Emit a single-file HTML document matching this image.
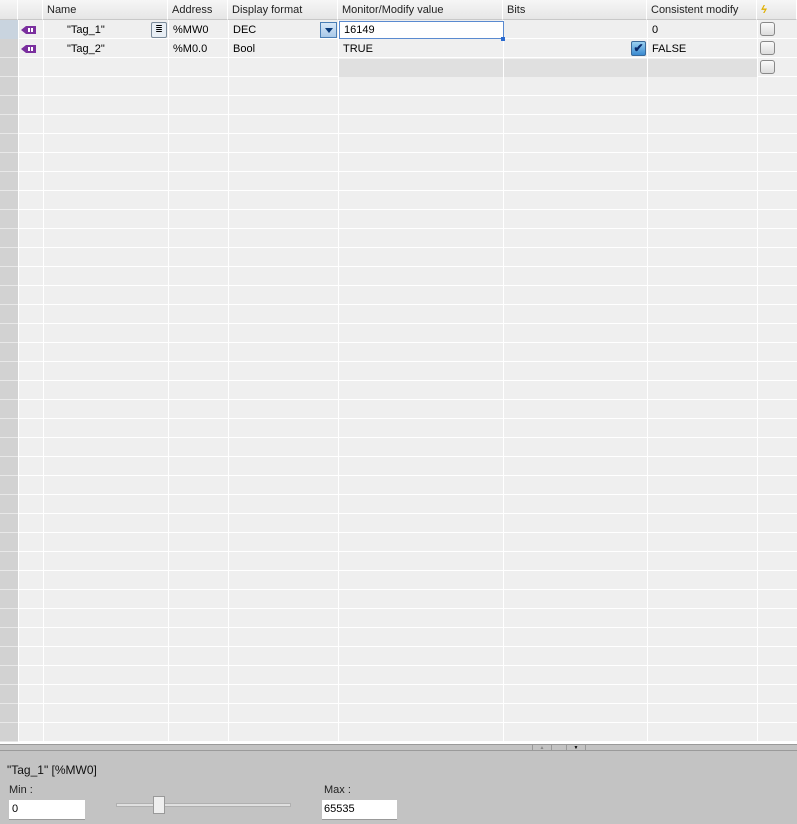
<!DOCTYPE html>
<html><head><style>
*{margin:0;padding:0;box-sizing:border-box}
body{width:797px;height:824px;overflow:hidden;background:#efefef;font-family:"Liberation Sans",sans-serif;font-size:11px;color:#000;position:relative}
.a{position:absolute}
.hdr{top:0;height:20px;background:linear-gradient(#f6f6f6,#e6e6e6);border-bottom:1px solid #c8c8c8;border-right:1px solid #fff;padding:4px 0 0 4px;color:#222}
.vl{position:absolute;top:20px;width:1px;height:722px;background:#fff}
.t{position:absolute;font-size:11px}
.cb{position:absolute;left:760px;width:15px;height:14px;border:1px solid #888;border-radius:3px;background:linear-gradient(#fafafa,#dcdcdc)}
</style></head><body>
<div class="a" style="left:0;top:20px;width:18px;height:722px;background:repeating-linear-gradient(#d2d2d2 0 18px,#e8e8e8 18px 19px)"></div>
<div class="a" style="left:0;top:20px;width:18px;height:19px;background:#c9d4df"></div>
<div class="a" style="left:18px;top:20px;width:779px;height:722px;background:repeating-linear-gradient(#efefef 0 18px,#fff 18px 19px)"></div>
<div class="a" style="left:338px;top:59px;width:419px;height:18px;background:#e0e0e0"></div>
<div class="vl" style="left:18px"></div><div class="vl" style="left:43px"></div><div class="vl" style="left:168px"></div><div class="vl" style="left:228px"></div><div class="vl" style="left:338px"></div><div class="vl" style="left:503px"></div><div class="vl" style="left:647px"></div><div class="vl" style="left:757px"></div>
<div class="a hdr" style="left:0;width:18px"></div>
<div class="a hdr" style="left:18px;width:25px"></div>
<div class="a hdr" style="left:43px;width:125px">Name</div>
<div class="a hdr" style="left:168px;width:60px">Address</div>
<div class="a hdr" style="left:228px;width:110px">Display format</div>
<div class="a hdr" style="left:338px;width:165px">Monitor/Modify value</div>
<div class="a hdr" style="left:503px;width:144px">Bits</div>
<div class="a hdr" style="left:647px;width:110px">Consistent modify</div>
<div class="a hdr" style="left:757px;width:40px;color:#e0b000;font-weight:bold;font-style:italic">ϟ</div>
<svg class="a" style="left:21px;top:25px" width="16" height="10"><path d="M0 5 L5 1 H15 V9 H5Z" fill="#7a2f9e"/><rect x="7" y="3" width="2" height="4" fill="#fff"/><rect x="10" y="3" width="2" height="4" fill="#fff"/></svg>
<svg class="a" style="left:21px;top:44px" width="16" height="10"><path d="M0 5 L5 1 H15 V9 H5Z" fill="#7a2f9e"/><rect x="7" y="3" width="2" height="4" fill="#fff"/><rect x="10" y="3" width="2" height="4" fill="#fff"/></svg>
<div class="t" style="left:67px;top:24px">"Tag_1"</div>
<div class="a" style="left:151px;top:22px;width:16px;height:16px;border:1px solid #7a8a9a;border-radius:2px;background:#e8eef4;font-size:9px;text-align:center;line-height:13px">≣</div>
<div class="t" style="left:173px;top:24px">%MW0</div>
<div class="t" style="left:233px;top:24px">DEC</div>
<div class="a" style="left:320px;top:22px;width:17px;height:16px;border:1px solid #4a7eb5;background:linear-gradient(#d8e8f8,#a8c8e8)"><div class="a" style="left:4px;top:5px;border-left:4px solid transparent;border-right:4px solid transparent;border-top:5px solid #0a3a7a"></div></div>
<div class="a" style="left:339px;top:21px;width:165px;height:18px;background:#fff;border:1px solid #5a8ad0;padding:2px 4px;font-size:11px">16149</div>
<div class="a" style="left:501px;top:37px;width:4px;height:4px;background:#2a6ad0"></div>
<div class="t" style="left:652px;top:24px">0</div>
<div class="t" style="left:67px;top:43px">"Tag_2"</div>
<div class="t" style="left:173px;top:43px">%M0.0</div>
<div class="t" style="left:233px;top:43px">Bool</div>
<div class="t" style="left:343px;top:43px">TRUE</div>
<div class="a" style="left:631px;top:41px;width:15px;height:15px;border:1px solid #3a6a9a;border-radius:2px;background:linear-gradient(#9ad0f0,#3a8ad0);color:#0a2a6a;font-size:12px;line-height:12px;text-align:center;font-weight:bold">✔</div>
<div class="t" style="left:652px;top:43px">FALSE</div>
<div class="cb" style="top:22px"></div><div class="cb" style="top:41px"></div><div class="cb" style="top:60px"></div>
<div class="a" style="left:0;top:742px;width:797px;height:82px;background:#c3c3c3;border-top:2px solid #fff"></div>
<div class="a" style="left:0;top:744px;width:797px;height:1px;background:#9a9a9a"></div>
<div class="a" style="left:0;top:750px;width:797px;height:1px;background:#9a9a9a"></div>
<div class="a" style="left:532px;top:745px;width:20px;height:5px;border-left:1px solid #999;border-right:1px solid #999;font-size:5px;text-align:center;color:#888">▲</div>
<div class="a" style="left:566px;top:745px;width:20px;height:5px;border-left:1px solid #999;border-right:1px solid #999;font-size:5px;text-align:center">▼</div>
<div class="t" style="left:7px;top:763px;font-size:12px;color:#111">"Tag_1" [%MW0]</div>
<div class="t" style="left:9px;top:784px;font-size:11px;color:#222">Min :</div>
<div class="a" style="left:9px;top:800px;width:76px;height:20px;background:#fff;border-bottom:1px solid #999;padding:3px 3px;font-size:11px">0</div>
<div class="a" style="left:116px;top:803px;width:175px;height:4px;background:#e0e0e0;border:1px solid #b0b0b0"></div>
<div class="a" style="left:153px;top:796px;width:12px;height:18px;background:#efefef;border:1px solid #999"></div>
<div class="t" style="left:324px;top:784px;font-size:11px;color:#222">Max :</div>
<div class="a" style="left:322px;top:800px;width:75px;height:20px;background:#fff;border-bottom:1px solid #999;padding:3px 2px;font-size:11px">65535</div>
</body></html>
